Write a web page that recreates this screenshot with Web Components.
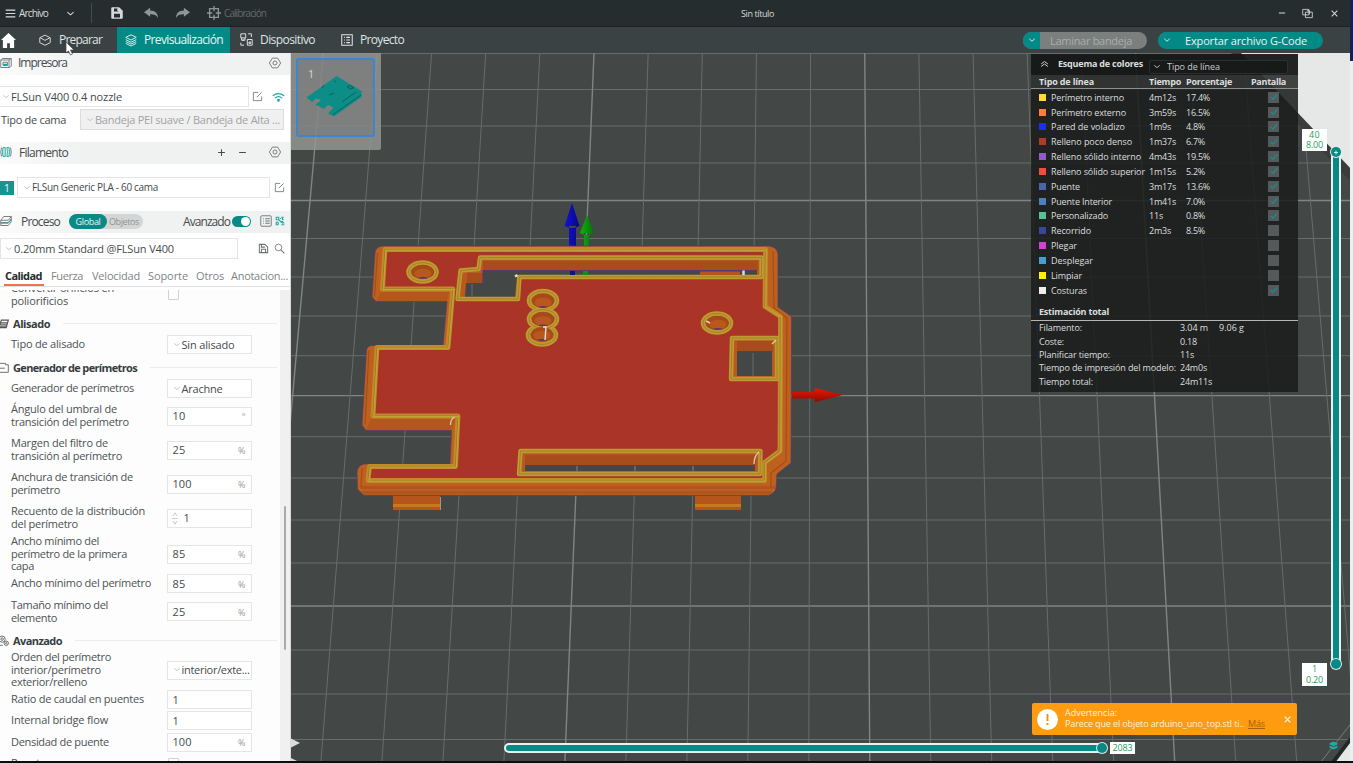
<!DOCTYPE html>
<html lang="es">
<head>
<meta charset="utf-8">
<title>Sin título</title>
<style>
html,body{margin:0;height:100%;overflow:hidden;background:#0c0d0d}
body{font-family:"Open Sans","Noto Sans",sans-serif;font-size:11px;width:1353px;height:763px}
</style>
</head>
<body>
<slicer-app></slicer-app>
<script>
const define = (tag, css, html, setup) => customElements.define(tag, class extends HTMLElement {
  connectedCallback() {
    if (this.shadowRoot) return;
    const root = this.attachShadow({ mode: 'open' });
    root.innerHTML = `<style>*{box-sizing:border-box}${css}</style>` + (typeof html === 'function' ? html(this) : html);
    if (setup) setup(this, root);
  }
});

const ICONS = {
  menu: '<path d="M1 3h14M1 8h14M1 13h14" stroke-width="1.8"/>',
  chev: '<path d="M2.5 5.5 8 10.5l5.500-5" stroke-width="1.8"/>',
  save: '<path d="M1 1h10l4 4v10H1z" fill="currentColor"/><path d="M4 2h6v4H4zM4 9h8v5H4z" fill="#262d2f" stroke="none"/><path d="M9 2h2v3H9z" fill="currentColor"/>',
  undo: '<path d="M0 7 7 1v3.500c6 .2 9 4 9 10-2-4-4-5-9-5V13z" fill="currentColor" stroke="none"/>',
  redo: '<path d="M16 7 9 1v3.500c-6 .2-9 4-9 10 2-4 4-5 9-5V13z" fill="currentColor" stroke="none"/>',
  calib: '<path d="M3 3h10v10H3zM8 0v6M8 10v6M0 8h6M10 8h6" stroke-width="1.500"/>',
  home: '<path d="M8 0 0 7.500h2V16h4.500v-5h3v5H14V7.500h2z" fill="currentColor" stroke="none"/>',
  cube: '<path d="M8 1.500 15 5v6.500L8 15l-7-3.500V5zM1.500 5 8 8.500 14.500 5"/>',
  layers: '<path d="M8 1 15 4.500 8 8 1 4.500zM1 7.500 8 11l7-3.500M1 10l7 3.500L15 10M1 12.500 8 16l7-3.500"/>',
  device: '<path d="M1 1h6v5H1zM3 8.500h2M2 6v3h4V6M10 1h4v4M1 12v3h4M9 8h6v7H9zM11 11h2v2h-2z"/>',
  project: '<path d="M1 1h14v14H1zM4 4.500h1M4 8h1M4 11.500h1M7 4.500h5M7 8h5M7 11.500h5" stroke-width="1.4"/>',
  min: '<path d="M3 8h10" stroke-width="1.6"/>',
  restore: '<path d="M1 2h9v8H1zM5 6h10v8H5zM7 4h4v5"/>',
  close: '<path d="M3 3l10 10M13 3 3 13" stroke-width="1.800"/>',
  printer: '<path d="M3 2h12v10l-2 2H1V4zM1 4h11v10M12 4l3-2M4 7h6v4H4z"/><path d="M4 9h6v3H4z" fill="#1aa79c" stroke="none"/>',
  gear: '<path d="M4.500 1.500h7L15.500 8l-4 6.500h-7L.5 8z"/><circle cx="8" cy="8" r="2.700"/>',
  edit: '<path d="M9 2H2v12h12V8M7 9l7-7"/>',
  wifi: '<path d="M1 6.500q7-6 14 0M3.500 9.500q4.500-4 9 0M6.500 12q1.500-1.500 3 0" stroke-width="1.600"/><circle cx="8" cy="13" r="1" fill="currentColor"/>',
  spool: '<path d="M2 2q-2 6 0 12M14 2q2 6 0 12"/><path d="M4 2h3v12H4q-2-6 0-12zM9 2h3q2 6 0 12H9q2-6 0-12z" stroke="#2aaba2" fill="#bfe5e2"/>',
  plus: '<path d="M8 2v12M2 8h12" stroke-width="1.800"/>',
  minus: '<path d="M2 8h12" stroke-width="1.800"/>',
  stack: '<path d="M5 2h10l-4 5H1zM1 7v3h10l4-5V2M1 10v4h10l4-5V5"/><path d="M1 11h10l4-5" stroke="#1aa79c"/>',
  list: '<rect x="1" y="1" width="14" height="14" rx="1.500"/><path d="M4 5h1M4 8h1M4 11h1M7 5h6M7 8h6M7 11h6" stroke-width="1.300"/>',
  nodes: '<path d="M2 2h4v4H2zM10 2h4M12 2v4h2M2 10h3v4H2zM6 6l5 5M9 9h3v2h3M10 14h5M8 4h2" stroke-width="1.800"/>',
  disk: '<path d="M2 2h8l4 4v8H2zM5 2v4h5M5 14V9h6v5" stroke-width="1.500"/>',
  search: '<circle cx="6.500" cy="6.500" r="4.800"/><path d="M10 10l5 5" stroke-width="1.500"/>',
  iron: '<path d="M1 14h11L15 3H5zM3 10h10M4 7h10M2 13h10" stroke-width="1.700"/>',
  wall: '<path d="M0 2h11v2h4v11H2M0 6l3 3h7"/>',
  cogs: '<circle cx="6" cy="6" r="4.500"/><circle cx="6" cy="6" r="1.800"/><circle cx="12" cy="12" r="3.200"/><circle cx="12" cy="12" r="1"/><path d="M1 12v3h6"/>',
  dblup: '<path d="M2 8l6-5 6 5M2 13l6-5 6 5" stroke-width="1.700"/>',
  check: '<path d="M3 8l3.500 3.500L13 4" stroke-width="2"/>',
  spin: '<path d="M4 5l4-4 4 4M4 11l4 4 4-4M2 8h12"/>',
  plates: '<path d="M8 1 15 4v2L8 9 1 6V4zM1 8l7 3 7-3v4l-7 3-7-3z" fill="currentColor" stroke="none"/>'
};
define('x-icon', ':host{display:block;flex:none}svg{display:block;width:100%;height:100%;overflow:visible}',
  el => `<svg viewBox="0 0 16 16" fill="none" stroke="currentColor" stroke-width="1.2" preserveAspectRatio="none">${ICONS[el.getAttribute('name')]}</svg>`,
  el => { el.style.width = (el.getAttribute('w') || 12) + 'px'; el.style.height = (el.getAttribute('h') || el.getAttribute('w') || 12) + 'px'; });

/* ---------- window chrome ---------- */
define('title-bar', `:host{display:flex;align-items:center;height:27px;background:#262d2f;border-bottom:1px solid #1b2021;color:#d6dada;font-size:10px;padding-left:5px}
  .d{width:1px;height:20px;background:#444b4d;margin-left:16px}.g{color:#8f9696}.c{color:#626a6b}`,
  `<x-icon name="menu" w="11" h="11"></x-icon><t-x w="29" style="margin-left:3px">Archivo</t-x>
  <x-icon name="chev" w="9" style="margin-left:18px"></x-icon><i class="d"></i>
  <x-icon name="save" w="12" style="margin-left:19px"></x-icon>
  <x-icon class="g" name="undo" w="14" h="12" style="margin-left:21px"></x-icon>
  <x-icon class="g" name="redo" w="14" h="12" style="margin-left:18px"></x-icon>
  <x-icon class="g" name="calib" w="14" style="margin-left:17px"></x-icon>
  <t-x class="c" w="42" style="margin-left:3px">Calibración</t-x>
  <t-x w="33" style="margin-left:475px;font-size:9px">Sin título</t-x>
  <x-icon name="min" w="10" style="margin-left:503px"></x-icon>
  <x-icon name="restore" w="11" style="margin-left:15px"></x-icon>
  <x-icon name="close" w="9" style="margin-left:17px"></x-icon>`);

define('tab-item', `:host{display:flex;align-items:center;height:26px;color:#dfe4e4;font-size:12px;padding:0 0 1px 8px;gap:8px;flex:none;box-sizing:border-box}
  :host([active]){background:#048a86;color:#e9f5f4}`, '<slot></slot>');
define('pill-button', `:host{display:flex;align-items:center;height:17px;border-radius:9px;overflow:hidden;background:#048a86;color:#e8f4f3;font-size:11px;flex:none}
  :host([disabled]){background:#7b7f7e;color:#a9aead}
  .a{width:17px;height:17px;background:#048a86;color:#e8f4f3;display:flex;align-items:center;justify-content:center}`,
  '<span class="a"><x-icon name="chev" w="8"></x-icon></span><slot></slot>');
define('tab-bar', ':host{display:flex;align-items:center;height:26px;background:#3a4243;color:#fff}', `
  <x-icon name="home" w="15" style="margin-left:1px"></x-icon>
  <tab-item style="margin-left:15px;width:86px"><x-icon name="cube" w="12"></x-icon><t-x w="43">Preparar</t-x></tab-item>
  <tab-item active style="width:113px;gap:7px"><x-icon name="layers" w="12"></x-icon><t-x w="79">Previsualización</t-x></tab-item>
  <tab-item style="margin-left:2px;gap:7px;width:101px"><x-icon name="device" w="13"></x-icon><t-x w="55">Dispositivo</t-x></tab-item>
  <tab-item style="gap:7px;width:90px"><x-icon name="project" w="12"></x-icon><t-x w="44">Proyecto</t-x></tab-item>
  <pill-button disabled style="margin-left:600px;width:124px"><t-x w="82" style="margin-left:10px">Laminar bandeja</t-x></pill-button>
  <pill-button style="margin-left:11px;width:165px"><t-x w="122" style="margin-left:10px">Exportar archivo G-Code</t-x></pill-button>`);

/* ---------- sidebar ---------- */
define('section-bar', ':host{display:flex;box-sizing:border-box;align-items:center;height:22px;padding-bottom:2px;background:linear-gradient(90deg,#fbfbfb,#f0f1f1 30%);font-size:12px;color:#444b4c}', '<slot></slot>');
define('select-box', `:host{display:flex;box-sizing:border-box;align-items:center;height:21px;border:1px solid #e3e4e4;background:#fff;color:#444b4c;font-size:11px;gap:1px;padding:0 0 1px 5px;flex:none}
  :host([off]){background:#f0f0f0;color:#a0a3a3;border-color:#dcdcdc}x-icon{color:#b8bcbc}`, '<x-icon name="chev" w="8" h="7"></x-icon><slot></slot>');
define('value-box', `:host{display:flex;box-sizing:border-box;align-items:center;width:85px;height:19px;border:1px solid #e4e5e5;background:#fff;color:#444b4c;font-size:11px;padding:0 5px 1px 5px;flex:none;overflow:hidden}
  .u{margin-left:auto;font-size:9px;color:#969a9a;padding-top:2px}x-icon{color:#b8bcbc}`,
  el => `${el.hasAttribute('drop') ? '<x-icon name="chev" w="8" h="7" style="margin-right:1px"></x-icon>' : el.hasAttribute('spin') ? '<x-icon name="spin" w="8" h="13" style="margin:1px 5px 0 -2px"></x-icon>' : ''}<slot></slot><span class="u">${el.getAttribute('unit') || ''}</span>`);

define('group-title', `:host{display:flex;align-items:center;height:16px;font-size:11px;font-weight:700;color:#353c3d;margin-top:var(--gap)}
  i{flex:1;height:1px;background:#ececec;margin:0 3px 0 13px}x-icon{color:#555;margin-left:-2px}`,
  el => `<x-icon name="${el.getAttribute('icon')}" w="11"></x-icon><t-x w="${el.getAttribute('w')}" style="margin-left:4px">${el.getAttribute('text')}</t-x><i></i>`);
define('setting-row', `:host{display:flex;align-items:center;margin-top:var(--gap);height:var(--h);color:#4b5253;font-size:11px;padding-left:11px}
  .l{width:155.500px;flex:none}t-x{display:block;height:12.8px;line-height:12.8px}`,
  el => `<div class="l">${el.getAttribute('lines').split('|').map(l => { const [t, w] = l.split(':'); return `<t-x w="${w}">${t}</t-x>`; }).join('')}</div><slot></slot>`);

const S = (gap, h, lines, ctl) => `<setting-row style="--gap:${gap}px;--h:${h}px" lines="${lines}">${ctl}</setting-row>`;
const V = (v, w, attrs = '') => `<value-box ${attrs}><t-x w="${w}">${v}</t-x></value-box>`;
const PC = 'unit="%"', BOX = '<i class="cb"></i>';
define('settings-list', `:host{display:flex;height:471px;overflow:hidden;background:#fdfdfd;margin-top:3px}
  .rows{width:280px;flex:none}.bar{width:11px;background:#f0f0f0;padding:216px 0 0 4px}
  .bar i{display:block;width:2px;height:144px;background:#a9abab;border-radius:1px}
  .cb{width:11px;height:11px;border:1px solid #cfd2d2;border-radius:1px;margin-left:1px}`,
  '<div class="rows">' +
  S(-8.5, 26, 'Convertir orificios en:103|poliorificios:57', BOX) +
  '<group-title style="--gap:8px" icon="iron" w="37" text="Alisado"></group-title>' +
  S(4, 18, 'Tipo de alisado:74', V('Sin alisado', 53, 'drop')) +
  '<group-title style="--gap:5.500px" icon="wall" w="124" text="Generador de perímetros"></group-title>' +
  S(4.5, 18, 'Generador de perímetros:123', V('Arachne', 41, 'drop')) +
  S(5.5, 26, 'Ángulo del umbral de:106|transición del perímetro:118', V('10', 13, 'unit="°"')) +
  S(8, 26, 'Margen del filtro de:97|transición al perímetro:111', V('25', 13, PC)) +
  S(8, 26, 'Anchura de transición de:122|perímetro:49', V('100', 19, PC)) +
  S(8, 26, 'Recuento de la distribución:134|del perímetro:67', V('1', 6, 'spin')) +
  S(3.5, 39, 'Ancho mínimo del:88|perímetro de la primera:116|capa:23', V('85', 13, PC)) +
  S(1, 18, 'Ancho mínimo del perímetro:140', V('85', 13, PC)) +
  S(6, 26, 'Tamaño mínimo del:97|elemento:46', V('25', 13, PC)) +
  '<group-title style="--gap:7.500px" icon="cogs" w="49" text="Avanzado"></group-title>' +
  S(2.5, 39, 'Orden del perímetro:100|interior/perímetro:90|exterior/relleno:76', V('interior/exte...', 68, 'drop')) +
  S(1, 18, 'Ratio de caudal en puentes:133', V('1', 6)) +
  S(3, 18, 'Internal bridge flow:97', V('1', 6)) +
  S(3.5, 18, 'Densidad de puente:98', V('100', 19, PC)) +
  S(3.5, 18, 'Puentes gruesos:81', BOX) +
  '</div><div class="bar"><i></i></div>');

define('quality-tabs', `:host{display:flex;box-sizing:border-box;align-items:center;height:28px;border-bottom:1px solid #dfe1e1;font-size:11px;color:#7e8586;padding:6px 0 0 5px}
  .on{align-self:stretch;display:flex;align-items:center;color:#252b2c;font-weight:700;border-bottom:2px solid #ee7350;margin-left:-1px;padding:2px 2px 0 1px}`,
  `<span class="on"><t-x w="37">Calidad</t-x></span><t-x w="32" style="margin-left:7px">Fuerza</t-x><t-x w="48" style="margin-left:9px">Velocidad</t-x>
  <t-x w="40" style="margin-left:8px">Soporte</t-x><t-x w="28" style="margin-left:8px">Otros</t-x><t-x w="57" style="margin-left:7px">Anotacion...</t-x>`);

define('side-bar', `:host{display:block;box-sizing:border-box;width:291px;height:708px;background:#fff;overflow:hidden;flex:none;color:#444b4c;border-right:1px solid #d8dada}
  .r{display:flex;align-items:center}.k{color:#6d7374}
  .b{width:14px;height:14px;background:#159490;color:#e5f5f4;font-size:11px;display:flex;align-items:center;justify-content:center}
  .seg{display:flex;height:15px;width:74px;border-radius:8px;background:#d4d6d6;margin-left:9px;font-size:9px;align-items:center;color:#8e9393}
  .seg b{display:flex;align-items:center;justify-content:center;width:38px;height:15px;border-radius:8px;background:#0a8a86;color:#e5f5f4;font-weight:400}
  .tg{width:19px;height:11px;border-radius:6px;background:#0a8a86;padding:1px 1px 1px 9px}.tg i{display:block;width:9px;height:9px;border-radius:50%;background:#fff}`, `
  <section-bar><x-icon class="k" name="printer" w="12"></x-icon><t-x w="49" style="margin:-1px 0 0 6px">Impresora</t-x><x-icon class="k" name="gear" w="12" style="margin:-1px 0 0 202px"></x-icon></section-bar>
  <div class="r" style="margin-top:11px"><select-box style="width:250px;margin-left:-1px;padding-left:2px"><t-x w="111">FLSun V400 0.4 nozzle</t-x></select-box><x-icon class="k" name="edit" w="11" style="margin-left:3px"></x-icon><x-icon name="wifi" w="13" h="12" style="margin-left:9px;color:#22a7a0"></x-icon></div>
  <div class="r" style="margin-top:2px"><t-x w="65" style="margin-left:1px;font-size:11px">Tipo de cama</t-x><select-box off style="width:204px;margin-left:14px"><t-x w="185">Bandeja PEI suave / Bandeja de Alta ...</t-x></select-box></div>
  <section-bar style="margin-top:12px"><x-icon class="k" name="spool" w="12"></x-icon><t-x w="49" style="margin-left:7px">Filamento</t-x><x-icon name="plus" w="9" style="margin-left:149px"></x-icon><x-icon name="minus" w="9" style="margin-left:12px"></x-icon><x-icon class="k" name="gear" w="12" style="margin-left:22px"></x-icon></section-bar>
  <div class="r" style="margin-top:13px"><span class="b">1</span><select-box style="width:253px;margin-left:3px;font-size:10px"><t-x w="126">FLSun Generic PLA - 60 cama</t-x></select-box><x-icon class="k" name="edit" w="11" style="margin-left:4px"></x-icon></div>
  <section-bar style="margin-top:13px"><x-icon class="k" name="stack" w="12"></x-icon><t-x w="39" style="margin-left:9px">Proceso</t-x>
    <span class="seg"><b><t-x w="25">Global</t-x></b><t-x w="30" style="margin-left:2px">Objetos</t-x></span>
    <t-x w="47" style="margin-left:40px">Avanzado</t-x><span class="tg" style="margin-left:2px"><i></i></span><x-icon class="k" name="list" w="12" style="margin-left:9px"></x-icon><x-icon name="nodes" w="10" style="margin-left:3px;color:#2aaba2"></x-icon></section-bar>
  <div class="r" style="margin-top:5px"><select-box style="width:238px;padding-left:4px"><t-x w="160">0.20mm Standard @FLSun V400</t-x></select-box><x-icon class="k" name="disk" w="11" style="margin-left:20px"></x-icon><x-icon class="k" name="search" w="11" style="margin-left:5px"></x-icon></div>
  <quality-tabs></quality-tabs><settings-list></settings-list>`);

/* ---------- 3D scene ---------- */
const sceneGrid = () => {
  let s = '';
  [53.5, 89.5, 126, 163, 200.5, 238.5, 277, 316, 355.7, 395.6, 436.7, 478, 520, 563, 606, 650, 694, 739.5].forEach((y, i) => {
    s += `<path d="M291 ${y}H1353" stroke="${i % 5 === 4 ? '#818582' : '#686c6a'}" stroke-width="${i % 5 === 4 ? 1.4 : 1}"/>`; });
  for (let i = -5; i <= 14; i++) {
    const a = 594 + 54.15 * i, b = 564.8 + 61 * i, m = i % 5 === 0;
    s += `<path d="M${a} 53L${b} 763" stroke="${m ? '#818582' : '#686c6a'}" stroke-width="${m ? 1.4 : 1}"/>`; }
  return s;
};
const ring = (x, y, rx, ry) => `<ellipse cx="${x}" cy="${y}" rx="${rx}" ry="${ry}" fill="#a94e1c" stroke="#bf9a30" stroke-width="4.600"/><ellipse cx="${x}" cy="${y}" rx="${rx}" ry="${ry}" fill="none" stroke="#97752a" stroke-width=".7"/>`;
const bore = (x, y) => `<ellipse cx="${x}" cy="${y}" rx="11" ry="7" fill="#a64a19"/><ellipse cx="${x}" cy="${y + 1.5}" rx="8.500" ry="4.800" fill="#b8581d"/><path d="M${x - 5} ${y + 6}q5-2 10 0q-5 1.500-10 0" fill="#54366a"/>`;
const FACE = 'M385 249.500H765.500L765 306.500L780.500 316.500L780 451L764.500 462.500V480.500H368L369.500 466.500H455.500L458 416H373L377 347.500H448L453 289H382.500Z';
const cut = (outer, wall, hole, edge) => `<path d="${outer}" fill="#b9581f"/><path d="${wall}" fill="#a64d1b"/><path d="${hole}" fill="#434746"/><path d="${edge}" stroke="#57396b" stroke-width="1.200" fill="none"/>
  <path d="${outer}" fill="none" stroke="#bf9a30" stroke-width="4.400" stroke-linejoin="round"/><path d="${outer}" fill="none" stroke="#97752a" stroke-width=".7"/>`;
define('bed-scene', ':host{display:block;width:1062px;height:708px}svg{display:block}', () => `
<svg width="1062" height="708" viewBox="291 53 1062 708">
  <defs>
    <pattern id="weave" width="3" height="3" patternUnits="userSpaceOnUse"><rect width="3" height="3" fill="#ac3527"/><path d="M0 3 3 0" stroke="#a03023" stroke-width=".6"/></pattern>
    <linearGradient id="bl"><stop offset="0" stop-color="#1212d8"/><stop offset="1" stop-color="#080880"/></linearGradient>
    <linearGradient id="gr"><stop offset="0" stop-color="#0bb60b"/><stop offset="1" stop-color="#067006"/></linearGradient>
    <linearGradient id="rd" x1="0" x2="0" y1="0" y2="1"><stop offset="0" stop-color="#ee1800"/><stop offset="1" stop-color="#8c0c00"/></linearGradient>
  </defs>
  <rect x="291" y="53" width="1062" height="708" fill="#434746"/>
  ${sceneGrid()}
  <path d="M1231 53H1353V184Z" fill="#3a3d3c"/><path d="M1241 53H1353V171Z" fill="#e6e7e7"/>
  <path d="M1330 763 1353 733V763Z" fill="#242727"/><path d="M1353 721 1320 763" stroke="#777b79"/><path d="M1335 763 1353 739V763Z" fill="#e6e7e7"/>
  <path d="M291 738.500 300 743 291 747.500ZM291 758 299 762H291Z" fill="#dcdede"/>
  <path d="M393 495H440V510H393ZM695 495H741V510H695Z" fill="#b5541b"/><path d="M393 504H440V507H393ZM695 504H741V507H695Z" fill="#c57a22"/><path d="M440.500 497v13" stroke="#b9a9a0" stroke-width=".8"/>
  <path fill="url(#bl)" d="M569 226h7v20h-7zM572 203l-7.500 23q7.500 4 15 0z"/>
  <path fill="url(#gr)" d="M584 233h5v13h-5zM587 215l-7 18q7 4 14 0z"/>
  <path d="M382 246H769Q777 247 778 254L778 307L791.500 316.500L791 463L777 474L776 488Q774 494 768 495.500H364L357.500 489L357 472Q358 465 364 464H450L451.500 430.500H366L362 425L366.500 350Q367 346 371 345.500H443L447 301.500H376L372 297L375 252Q376 247 382 246Z" fill="#be611f" stroke="#57396b" stroke-width=".7"/>
  <path d="M359 486H776L770 494.500H364Z" fill="#b0551d"/><path d="M359 490H775" stroke="#c96d22" stroke-width="1"/>
  <path d="M381 292H449L447 301H376ZM371 419H456L451 430H366Z" fill="#b3571d"/>
  <path d="M377.500 253 374.500 297M369 350 365 425M773 251 774 308 787 318 786 461 771 473V488M362 468 361 487" stroke="#a44d1a" stroke-width="1.200" fill="none"/>
  <path d="${FACE}" fill="url(#weave)" stroke="#c28a2a" stroke-width="4.800" stroke-linejoin="round"/>
  <path d="${FACE}" fill="none" stroke="#8f6a24" stroke-width=".7"/><path d="${FACE}" fill="none" stroke="#bfa534" stroke-width="1.200" transform="translate(.8 .7)"/>
  ${cut('M480 257.500H761.500V277H519.500L518 299H457.500L460.500 270.500L478.500 269Z', 'M483 261H758V270H483V283H467V273H483Z', 'M483 270.500H757V275H517L515 297H465L466 284H483Z', 'M466 283.500H483V270.500H757')}
  <path d="M700 271.500H740V275H700Z" fill="#b5541b"/><path d="M570 271h5v4h-5z" fill="#101090"/><path d="M583 271h5v4h-5z" fill="#0a960a"/><path d="M743.500 270.500v4.500" stroke="#ddd" stroke-width="2.500"/><path d="M472 284v12" stroke="#686c6a"/><path d="M515 276.500l2.500-1.500" stroke="#ddd" stroke-width="2.500"/>
  ${cut('M732 338H777V379H731Z', 'M737 341H773V352H737Z', 'M737 352H772V376H737Z', 'M737 351.500H772')}<path d="M753 353v23" stroke="#686c6a"/><path d="M772 344l4-4" stroke="#e0c9a8" stroke-width="1.500"/>
  ${cut('M520.500 451H760.500L760 474H519Z', 'M525 455H756V465H525Z', 'M525 465.500H755V471H525Z', 'M525 465.500H755')}<path d="M577 466v5M635 466v5M693 466v5" stroke="#858987"/><path d="M754 464q0-8 5-12" stroke="#dfc7b4" stroke-width="1.300" fill="none"/><path d="M450.500 425q0-6 4-8" stroke="#dfc7b4" stroke-width="1.300" fill="none"/>
  ${ring(422.500, 272, 14, 9.500)}${bore(423, 272)}
  ${ring(543, 300.500, 14, 9.500)}${ring(542, 335, 14, 9.500)}${ring(543, 319, 14, 9.500)}${bore(543, 301)}${bore(543, 319.500)}${bore(542, 334)}<path d="M543 327h3l-1 13" stroke="#e5dfdd" stroke-width="1.400" fill="none"/>
  ${ring(717, 323, 14, 9.500)}${bore(718, 323)}<path d="M706 321l4 2" stroke="#e5cfbd" stroke-width="1.500"/>
  <path fill="url(#rd)" d="M792 392h24v6.500h-24zM815 388l28 7-28 7q-2-7 0-14z"/>
</svg>`);

define('plate-thumb', `:host{display:block;box-sizing:border-box;width:90px;height:97px;background:rgba(150,151,150,.82);padding:5px 0 0 5px;border-radius:0 0 2px 0}
  .b{width:79px;height:79px;border:2px solid #3b86cf;border-radius:3px;color:#d6d8d8;font-size:11px;padding:6px 0 0 10px;background:rgba(110,112,111,.35);display:grid}.b>*{grid-area:1/1}
  svg{margin:-6px 0 0 -10px}`,
  `<div class="b"><span>1</span><svg width="75" height="75" viewBox="298 60 75 75"><path d="M336.500 76 361.500 91V97L334 116.500 328 113.500 333.500 107.500 328 105 324 109 315.500 104.500 321 100 316 98.500 312 102 306.500 97.500Z" fill="#0d8d87"/><path d="M334 80.500 336 82M329 95 334 93M324 85 322 88M342 102 356 92M347 87l3-1.500 4 2-3 1.500zM333 114.500 361 95" stroke="#075f5c" fill="none" stroke-width=".9"/></svg></div>`);

/* ---------- legend ---------- */
const ROWS = [['#ffd83d', 'Perímetro interno', 73, '4m12s', 27, '17.4%', 24, 1], ['#ff7f3a', 'Perímetro externo', 75, '3m59s', 27, '16.5%', 24, 1], ['#1c2cff', 'Pared de voladizo', 74, '1m9s', 22, '4.8%', 19, 1], ['#ad3b28', 'Relleno poco denso', 81, '1m37s', 27, '6.7%', 19, 1], ['#9457cc', 'Relleno sólido interno', 90, '4m43s', 27, '19.5%', 24, 1], ['#f34c3e', 'Relleno sólido superior', 94, '1m15s', 27, '5.2%', 19, 1], ['#4a66a8', 'Puente', 29, '3m17s', 27, '13.6%', 24, 1], ['#4a80bd', 'Puente Interior', 61, '1m41s', 27, '7.0%', 19, 1], ['#58c093', 'Personalizado', 57, '11s', 14, '0.8%', 19, 1], ['#35489a', 'Recorrido', 40, '2m3s', 22, '8.5%', 19, 0], ['#d83fd6', 'Plegar', 26, '', 0, '', 0, 0], ['#42a1d2', 'Desplegar', 42, '', 0, '', 0, 0], ['#fff000', 'Limpiar', 31, '', 0, '', 0, 0], ['#eeeeee', 'Costuras', 36, '', 0, '', 0, 1]];
const TOTAL = [['Filamento:', 43, '3.04 m', 28, '9.06 g', 25], ['Coste:', 25, '0.18', 17], ['Planificar tiempo:', 71, '11s', 14], ['Tiempo de impresión del modelo:', 137, '24m0s', 27], ['Tiempo total:', 54, '24m11s', 32]];
const T = (t, w) => t ? `<t-x w="${w}">${t}</t-x>` : '<span></span>';
define('color-legend', `:host{display:block;width:267px;height:338px;background:rgba(27,29,29,.87);color:#dcdfdf;font-size:9px}
  .h{display:flex;align-items:center;height:21px;background:rgba(18,20,20,.55);padding-left:9px}.h b{margin:-2px 0 0 9px}
  .s{display:flex;align-items:center;gap:6px;margin-left:6px;width:139px;height:14px;border:1px solid #2c2f2f;padding-left:3px;margin-top:4px;color:#c9cccc;background:#181a1a;border-radius:2px}
  .g{display:grid;grid-template-columns:12px 98px 37px 82px 1fr;align-items:center;height:14.85px;padding-left:8px}
  .th{display:grid;grid-template-columns:110px 37px 65px 1fr;height:14px;padding-left:8px;align-items:center;background:rgba(90,92,92,.3);border-bottom:1px solid #8d9090;margin-bottom:.8px;font-weight:700}
  .q{width:7px;height:7px}.c{width:11px;height:11px;background:#565959;color:#16908b;display:block}.c x-icon{margin:.5px}
  .e{font-weight:700;height:22px;display:flex;align-items:center;padding:3px 0 0 8px;border-bottom:1px solid #b4b6b6}
  .t{display:grid;grid-template-columns:141px 39px 1fr;height:13.35px;align-items:center;padding-left:8px}`,
  () => `<div class="h"><x-icon name="dblup" w="9" h="8" style="margin-top:-1px"></x-icon><b><t-x w="85">Esquema de colores</t-x></b><span class="s"><x-icon name="chev" w="8" h="7"></x-icon><t-x w="53">Tipo de línea</t-x></span></div>
  <div class="th"><t-x w="55">Tipo de línea</t-x><t-x w="32">Tiempo</t-x><t-x w="46">Porcentaje</t-x><t-x w="35">Pantalla</t-x></div>` +
  ROWS.map(r => `<div class="g"><i class="q" style="background:${r[0]}"></i>${T(r[1], r[2])}${T(r[3], r[4])}${T(r[5], r[6])}<i class="c">${r[7] ? '<x-icon name="check" w="10"></x-icon>' : ''}</i></div>`).join('') +
  '<div style="height:1.500px"></div><div class="e"><t-x w="70">Estimación total</t-x></div>' +
  TOTAL.map(r => `<div class="t">${T(r[0], r[1])}${T(r[2], r[3])}${r[4] ? T(r[4], r[5]) : ''}</div>`).join(''));

/* ---------- sliders and notice ---------- */
define('range-slider', `:host{display:block;box-sizing:border-box;border:2px solid #e8f2f1;border-radius:6px;background:#078a86}
  i{position:absolute;width:10px;height:10px;border-radius:50%;background:#078a86;box-shadow:0 0 0 1px #d9ebe9}
  .a{left:-2px;top:-4px}.b{left:-2px;bottom:-4px}:host([flat]) .a{display:none}:host([flat]) .b{left:auto;right:-2px;bottom:-2px}
  .a::before,.a::after{content:"";position:absolute;left:3px;top:4.500px;width:4px;height:1px;background:#cfe9e7}.a::after{transform:rotate(90deg)}`, '<i class="a"></i><i class="b"></i>');
define('value-tag', ':host{display:flex;flex-direction:column;align-items:center;justify-content:center;background:#fff;color:#27a05a;font-size:9px;line-height:10.500px}', '<slot></slot>');
define('warning-toast', `:host{display:flex;box-sizing:border-box;align-items:center;width:265px;height:32px;background:#fe9b10;border-radius:2px;color:#fff1dc;font-size:9px;line-height:10.600px;padding-left:5px}
  svg{display:block;flex:none}.m{margin-left:7px}.r{display:flex;gap:4px}u{color:#a8620b;text-decoration:none;height:10px;border-bottom:1px solid #a8620b}`,
  `<svg width="21" height="21" viewBox="0 0 21 21"><circle cx="10.500" cy="10.500" r="10.500" fill="#fff"/><path d="M10.500 5v7M10.500 14v2" stroke="#ee8c0c" stroke-width="1.800"/></svg>
  <div class="m"><t-x w="52">Advertencia:</t-x><div class="r"><t-x w="179">Parece que el objeto arduino_uno_top.stl ti..</t-x><u><t-x w="17">Más</t-x></u></div></div>
  <x-icon name="close" w="9" style="margin-left:18px;color:#fff"></x-icon>`);

define('view-port', `:host{display:block;position:relative;width:1062px;height:708px;overflow:hidden;flex:none}
  :host>*,.o{position:absolute}.edge{right:0;top:0;width:3px;height:708px;background:#eceef1}`, `
  <bed-scene></bed-scene>
  <plate-thumb class="o" style="left:0;top:0"></plate-thumb>
  <color-legend class="o" style="left:740px;top:1px"></color-legend>
  <range-slider class="o" style="left:1040px;top:98px;width:10px;height:514px;border-width:0 2px"></range-slider>
  <range-slider class="o" flat style="left:213px;top:690px;width:603px;height:10px"></range-slider>
  <value-tag class="o" style="left:1011px;top:76px;width:25px;height:22px"><t-x w="11">40</t-x><t-x w="17">8.00</t-x></value-tag>
  <value-tag class="o" style="left:1011px;top:610px;width:25px;height:23px"><t-x w="5">1</t-x><t-x w="17">0.20</t-x></value-tag>
  <value-tag class="o" style="left:819px;top:689px;width:25px;height:12px"><t-x w="20">2083</t-x></value-tag>
  <warning-toast class="o" style="left:741px;top:650px"></warning-toast>
  <x-icon class="o" name="plates" w="9" style="left:1038px;top:688px;color:#20aaa4"></x-icon>
  <i class="o edge"></i>`);

define('mouse-pointer', ':host{display:block;position:absolute;left:65px;top:41px}svg{display:block}',
  '<svg width="10" height="15" viewBox="0 0 10 15"><path d="M1 1v11l2.500-2 2 4 2-1-2-4H9z" fill="#fff" stroke="#444" stroke-width=".7"/></svg>');
define('slicer-app', `:host{display:block;position:relative;width:1353px;height:763px;overflow:hidden;background:#0c0d0d}.m{display:flex}
  .e{position:absolute;right:0;top:0;width:3px;height:61px;background:#1b1d55}`,
  '<title-bar></title-bar><tab-bar></tab-bar><div class="m"><side-bar></side-bar><view-port></view-port></div><i class="e"></i><mouse-pointer></mouse-pointer>');

/* one line of text, tracked so that it fills the width given in "w" */
define('t-x', ':host{display:block;white-space:nowrap;flex:none}span{display:inline-block}', '<span><slot></slot></span>', (el, root) => {
  const w = +el.getAttribute('w'), n = el.textContent.length, span = root.querySelector('span');
  if (!w || n < 2) return;
  span.style.letterSpacing = ((w - span.getBoundingClientRect().width) / n) + 'px';
  el.style.width = w + 'px';
});
</script>
</body>
</html>
